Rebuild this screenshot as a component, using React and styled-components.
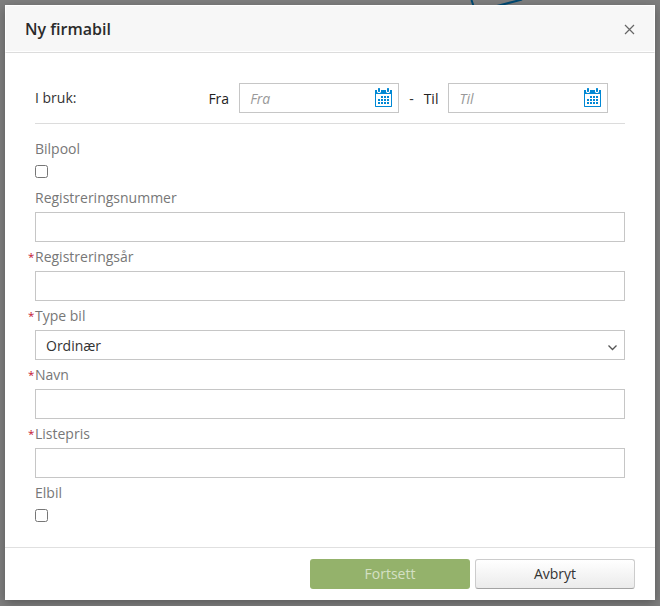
import React, { useState } from "react";
import styled, { createGlobalStyle } from "styled-components";

const GlobalStyle = createGlobalStyle`
    * {
        box-sizing: border-box;
    }
    body {
        margin: 0;
        background-color: #7f7f7f;
        font-family: "Open Sans", "Noto Sans", sans-serif;
        font-size: 14px;
        color: #333;
    }
    input, select, button {
        font-family: inherit;
        font-size: 14px;
    }
`;
const Page = styled.div`
    position: relative;
    height: 606px;
    padding: 5px;
    overflow: hidden;
`;
const Backdrop = styled.svg`
    position: absolute;
    top: 0;
    left: 465px;
`;
const Dialog = styled.div`
    position: relative;
    display: flex;
    flex-direction: column;
    width: 650px;
    height: 595px;
    background-color: white;
    box-shadow: 0 3px 10px rgba(0, 0, 0, 0.3);
`;
const Header = styled.div`
    display: flex;
    align-items: center;
    justify-content: space-between;
    height: 48px;
    padding: 0 19px;
    border: 1px solid white;
    border-bottom: 1px solid #dcdcdc;
    background-color: #f7f7f7;
    box-shadow: inset 0 -1px 0 white;
`;
const Title = styled.h1`
    margin: 0;
    font-size: 16px;
    font-weight: 600;
    line-height: 22px;
    color: #2b2b2b;
`;
const Close = styled.button`
    display: flex;
    padding: 1px 0 0;
    border: none;
    background: none;
`;
const Body = styled.div`
    flex: 1;
    padding: 30px 30px 0;
`;
const Period = styled.div`
    display: flex;
    align-items: center;
    height: 41px;
    padding-bottom: 10px;
    border-bottom: 1px solid #dcdcdc;
    margin-bottom: 10px;
`;
const PeriodLabel = styled.div`
    width: 173.4px;
    padding-bottom: 1px;
`;
const DateLabel = styled.label`
    margin-right: 10px;
    color: #222;
`;
const Dash = styled.span`
    margin: 0 10px;
`;
const DateBox = styled.div`
    display: flex;
    align-items: center;
    justify-content: space-between;
    width: 160px;
    height: 30px;
    padding: 0 6px 0 10px;
    border: 1px solid #c6c6c6;
`;
const DateInput = styled.input`
    width: 100px;
    padding: 0;
    border: none;
    outline: none;
    color: #333;
    &::placeholder {
        color: #999;
        font-style: italic;
    }
`;
const CalendarSvg = styled.svg`
    display: block;
    margin-bottom: 1px;
`;
const Field = styled.div`
    height: ${props => props.$check ? '49px' : '59px'};
`;
const Label = styled.label`
    position: relative;
    display: block;
    height: 29px;
    line-height: 30px;
    color: #777;
`;
const Required = styled.span`
    position: absolute;
    left: -7px;
    top: 0;
    font-size: 11.5px;
    color: #c4122f;
`;
const TextInput = styled.input`
    display: block;
    width: 100%;
    height: 30px;
    padding: 0 10px;
    border: 1px solid #c6c6c6;
    outline: none;
`;
const Checkbox = styled.input`
    display: block;
    width: 13px;
    height: 13px;
    margin: 2px 0 0;
`;
const SelectWrap = styled.div`
    position: relative;
`;
const Select = styled.select`
    appearance: none;
    display: block;
    width: 100%;
    height: 30px;
    padding: 0 10px;
    border: 1px solid #c6c6c6;
    border-radius: 0;
    background-color: white;
    color: #333;
`;
const Arrow = styled.svg`
    position: absolute;
    right: 8px;
    top: 15px;
    pointer-events: none;
`;
const Footer = styled.div`
    display: flex;
    justify-content: flex-end;
    gap: 5px;
    height: 53px;
    padding: 11px 20px 0;
    border-top: 1px solid #e0e0e0;
`;
const Button = styled.button`
    width: 160px;
    height: 30px;
    padding: 0 0 2px;
    border: 1px solid #ccc;
    border-bottom-color: #a3a3a3;
    border-radius: 3px;
    background: linear-gradient(white, #ebebeb);
    color: #333;
`;
const PrimaryButton = styled(Button)`
    border: none;
    background: #94b26b;
    color: #d4e0c4;
`;

const dots = [[6, 8], [9, 8], [12, 8], [3, 11], [6, 11], [9, 11], [12, 11], [3, 14], [6, 14], [9, 14], [12, 14]];

const CalendarIcon = () => (
    <CalendarSvg width="17" height="19" viewBox="0 0 17 19" fill="#0088d4">
        <path fillRule="evenodd" d="M0 2H2V4L3 5H5L6 4V2H11V4L12 5H14L15 4V2H17V18.5L16.5 19H0.5L0 18.5ZM1 6V18H16V6Z" />
        <path d="M3 0.5L3.5 0H4.5L5 0.5V3.5L4.5 4H3.5L3 3.5ZM12 0.5L12.5 0H13.5L14 0.5V3.5L13.5 4H12.5L12 3.5Z" />
        {dots.map(([x, y]) => <rect key={x + '-' + y} x={x} y={y} width="2" height="2" />)}
    </CalendarSvg>
);

const DateField = ({ label }) => {
    const [value, setValue] = useState('');
    return (
        <>
            <DateLabel>{label}</DateLabel>
            <DateBox>
                <DateInput placeholder={label} value={value} onChange={(e) => { setValue(e.target.value) }} />
                <CalendarIcon />
            </DateBox>
        </>
    )
};

const FormField = ({ label, required, check, children }) => (
    <Field $check={check}>
        <Label>{required && <Required>*</Required>}{label}</Label>
        {children || (check ? <Checkbox type="checkbox" /> : <TextInput type="text" />)}
    </Field>
);

const App = () => {
    return (
        <>
            <GlobalStyle />
            <Page>
                <Backdrop width="70" height="6" fill="none" stroke="#004a73" strokeWidth="2">
                    <path d="M6.5 0L8.5 6M32 6L57 -0.5" />
                </Backdrop>
                <Dialog>
                    <Header>
                        <Title>Ny firmabil</Title>
                        <Close aria-label="Lukk">
                            <svg width="11" height="11" viewBox="0 0 11 11" stroke="#666" strokeWidth="1.2">
                                <path d="M1 1L10 10M10 1L1 10" />
                            </svg>
                        </Close>
                    </Header>
                    <Body>
                        <Period>
                            <PeriodLabel>I bruk:</PeriodLabel>
                            <DateField label="Fra" />
                            <Dash>-</Dash>
                            <DateField label="Til" />
                        </Period>
                        <FormField label="Bilpool" check />
                        <FormField label="Registreringsnummer" />
                        <FormField label="Registreringsår" required />
                        <FormField label="Type bil" required>
                            <SelectWrap>
                                <Select>
                                    <option>Ordinær</option>
                                </Select>
                                <Arrow width="9" height="6" fill="none" stroke="#555" strokeWidth="1.3">
                                    <path d="M0.5 0.5L4.5 4.5L8.5 0.5" />
                                </Arrow>
                            </SelectWrap>
                        </FormField>
                        <FormField label="Navn" required />
                        <FormField label="Listepris" required />
                        <FormField label="Elbil" check />
                    </Body>
                    <Footer>
                        <PrimaryButton>Fortsett</PrimaryButton>
                        <Button>Avbryt</Button>
                    </Footer>
                </Dialog>
            </Page>
        </>
    )
}
export default App
